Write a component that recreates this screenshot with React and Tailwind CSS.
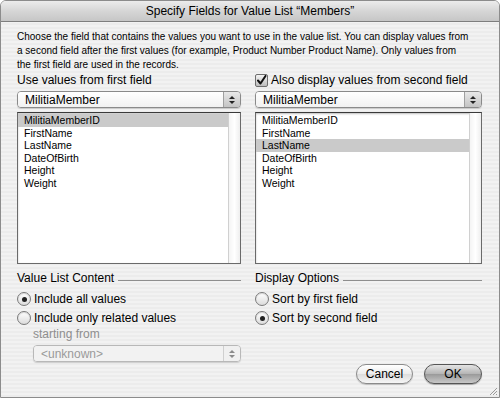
import React from "react";

const font = "font-['Liberation_Sans',Arial,sans-serif]";

function Popup({ text, disabled }) {
  return (
    <div
      className={`flex h-[17px] items-stretch rounded-[4px] border ${
        disabled ? "border-[#b8b8b8]" : "border-[#8a8a8a]"
      } overflow-hidden shadow-[0_1px_1px_rgba(0,0,0,0.15)]`}
    >
      <div
        className={`flex flex-1 items-center pl-[7px] text-[12px] ${
          disabled
            ? "bg-[#f2f2f2] text-[#9a9a9a]"
            : "bg-[linear-gradient(#ffffff,#f1f1f1)] text-black"
        }`}
      >
        {text}
      </div>
      <div
        className={`flex w-[17px] flex-col items-center justify-center gap-[2px] border-l ${
          disabled
            ? "border-[#cfcfcf] bg-[#f0f0f0]"
            : "border-[#a0a0a0] bg-[linear-gradient(#e8e8e8,#c4c4c4)]"
        }`}
      >
        <svg width="6" height="3" viewBox="0 0 6 3">
          <path d="M0 3 L3 0 L6 3 Z" fill={disabled ? "#8a8a8a" : "#222"} />
        </svg>
        <svg width="6" height="3" viewBox="0 0 6 3">
          <path d="M0 0 L3 3 L6 0 Z" fill={disabled ? "#8a8a8a" : "#222"} />
        </svg>
      </div>
    </div>
  );
}

function ListBox({ items, selected }) {
  return (
    <div className="flex h-[152px] border border-[#6a6a6a] border-t-[#3a3a3a] bg-white shadow-[inset_0_1px_2px_rgba(0,0,0,0.25)]">
      <div className="flex flex-1 flex-col pt-[1px]">
        {items.map((it) => (
          <div
            key={it}
            className={`flex h-[12.5px] items-center pl-[6px] text-[10.5px] leading-none text-black ${
              it === selected ? "bg-[#cacaca]" : ""
            }`}
          >
            {it}
          </div>
        ))}
      </div>
      <div className="w-[12px] border-l border-[#d0d0d0] bg-[linear-gradient(90deg,#f4f4f4,#ffffff,#eeeeee)]" />
    </div>
  );
}

function Radio({ checked, label }) {
  return (
    <div className="flex h-[16px] items-center gap-[3px]">
      <div className="flex h-[14px] w-[14px] items-center justify-center rounded-full border border-[#7a7a7a] bg-[linear-gradient(#ffffff,#dcdcdc)] shadow-[inset_0_1px_1px_rgba(0,0,0,0.15)]">
        {checked && <div className="h-[5px] w-[5px] rounded-full bg-[#222]" />}
      </div>
      <span className="text-[12px] text-black">{label}</span>
    </div>
  );
}

function GroupTitle({ text }) {
  return (
    <div className="flex h-[14px] items-center gap-[4px]">
      <span className="text-[12px] text-black">{text}</span>
      <div className="mt-[4px] h-px flex-1 bg-[#8e8e8e]" />
    </div>
  );
}

const fields = ["MilitiaMemberID", "FirstName", "LastName", "DateOfBirth", "Height", "Weight"];

export default function App() {
  return (
    <div className={`h-[398px] w-[500px] bg-white ${font}`}>
      <div className="flex h-full w-full flex-col overflow-hidden rounded-t-[6px] border border-[#8c8c8c]">
        <div className="flex h-[21px] shrink-0 items-center justify-center border-b border-[#7e7e7e] bg-[linear-gradient(#ececec,#d6d6d6_50%,#c6c6c6)] text-[12px] text-black">
          Specify Fields for Value List “Members”
        </div>
        <div className="relative flex flex-1 flex-col bg-[repeating-linear-gradient(0deg,#ececec_0px,#ececec_2px,#f2f2f2_2px,#f2f2f2_4px)] pl-[16px] pr-[17px] pt-[8px]">
          <p className="whitespace-nowrap text-[10px] leading-[14px] text-black">
            Choose the field that contains the values you want to use in the value list. You can display values from
            <br />
            a second field after the first values (for example, Product Number Product Name). Only values from
            <br />
            the first field are used in the records.
          </p>

          <div className="grid grid-cols-[224px_227px] gap-x-[14px]">
            <div className="flex h-[16px] items-center text-[12px] text-black">
              Use values from first field
            </div>
            <div className="flex h-[16px] items-center gap-[3px] text-[12px] text-black">
              <div className="flex h-[13px] w-[13px] items-center justify-center rounded-[2px] border border-[#6e6e6e] bg-[linear-gradient(#f4f4f4,#bcbcbc)]">
                <svg width="11" height="11" viewBox="0 0 11 11">
                  <path d="M2 5.5 L4.5 8.5 L9.5 1" fill="none" stroke="#111" strokeWidth="2" strokeLinecap="round" strokeLinejoin="round" />
                </svg>
              </div>
              Also display values from second field
            </div>

            <div className="mt-[3px]">
              <Popup text="MilitiaMember" />
            </div>
            <div className="mt-[3px]">
              <Popup text="MilitiaMember" />
            </div>

            <div className="mt-[4px]">
              <ListBox items={fields} selected="MilitiaMemberID" />
            </div>
            <div className="mt-[4px]">
              <ListBox items={fields} selected="LastName" />
            </div>

            <div className="mt-[7px] flex flex-col">
              <GroupTitle text="Value List Content" />
              <div className="mt-[6px] flex flex-col gap-[3px]">
                <Radio checked label="Include all values" />
                <Radio label="Include only related values" />
              </div>
              <div className="ml-[16px] mt-[1px] text-[12px] leading-[14px] text-[#8e8e8e]">starting from</div>
              <div className="ml-[16px] mt-[4px]">
                <Popup text="<unknown>" disabled />
              </div>
            </div>
            <div className="mt-[7px] flex flex-col">
              <GroupTitle text="Display Options" />
              <div className="mt-[6px] flex flex-col gap-[3px]">
                <Radio label="Sort by first field" />
                <Radio checked label="Sort by second field" />
              </div>
              <div className="mt-[38px] flex justify-end gap-[11px]">
                <div className="flex h-[20px] w-[57px] items-center justify-center rounded-full border border-[#8a8a8a] bg-[linear-gradient(#ffffff,#ececec_50%,#dcdcdc_51%,#f6f6f6)] text-[12px] text-black shadow-[0_1px_1px_rgba(0,0,0,0.2)]">
                  Cancel
                </div>
                <div className="flex h-[20px] w-[58px] items-center justify-center rounded-full border border-[#555] bg-[linear-gradient(#e4e4e4,#b4b4b4_50%,#9a9a9a_51%,#c8c8c8)] text-[12px] text-black shadow-[0_1px_1px_rgba(0,0,0,0.3)]">
                  OK
                </div>
              </div>
            </div>
          </div>

          <svg className="absolute bottom-[1px] right-[1px]" width="10" height="10" viewBox="0 0 10 10">
            <path d="M9 2 L2 9 M9 5 L5 9 M9 8 L8 9" stroke="#9a9a9a" strokeWidth="1" />
          </svg>
        </div>
      </div>
    </div>
  );
}
